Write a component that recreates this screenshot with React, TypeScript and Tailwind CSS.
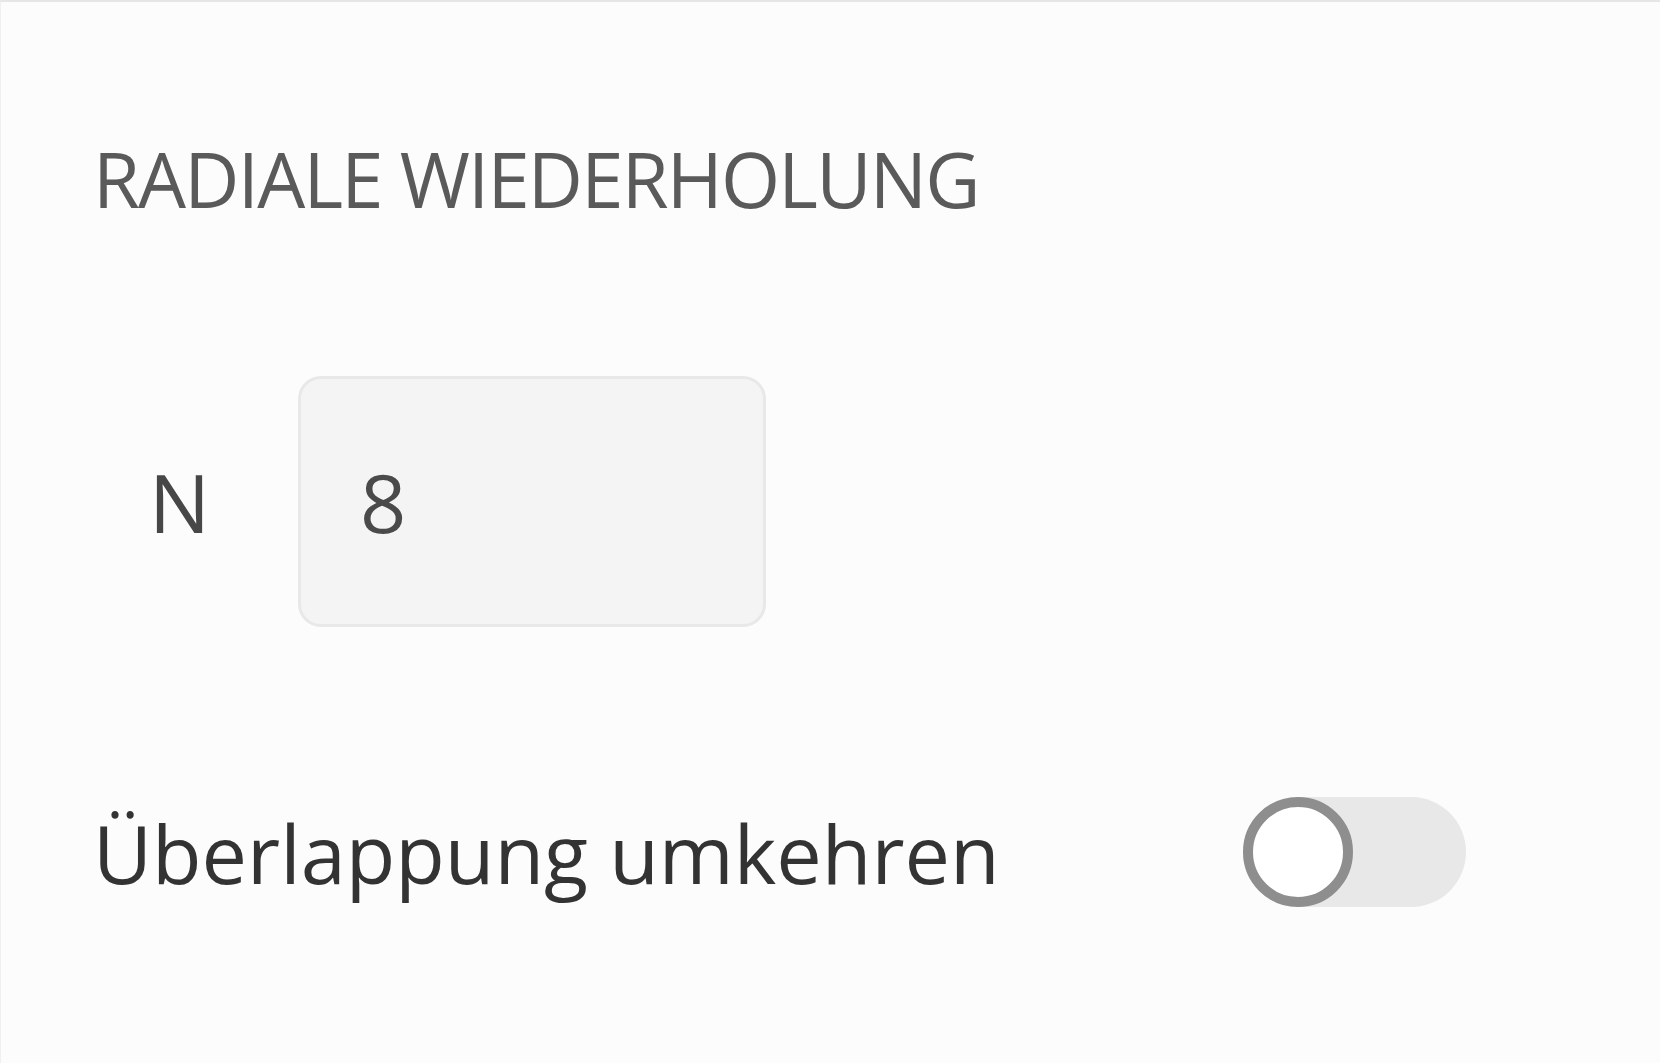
import React, { useState } from 'react';

// Radial repeat settings panel (zoomed Spectrum-like controls)
export default function App() {
  const [count, setCount] = useState('8');
  const [reverse, setReverse] = useState(false);

  return (
    <div className="w-[1660px] h-[1063px] bg-[#fcfcfc] border-t-2 border-t-[#e6e6e6] border-l border-l-[#f0f0f0] pl-[92px] pt-[139px] font-['Open_Sans','Noto_Sans',sans-serif]">
      <h2 className="text-[76px] leading-none text-[#5a5a5a] tracking-[-1.8px] uppercase font-normal">
        Radiale Wiederholung
      </h2>

      <div className="mt-[159px] flex items-center pl-[56px]">
        <label className="w-[149px] text-[81px] leading-none text-[#474747]">N</label>
        <div className="w-[468px] h-[251px] rounded-[23px] border-[3px] border-[#e8e8e8] bg-[#f4f4f4] flex items-center pl-[59px]">
          <input
            value={count}
            onChange={e => setCount(e.target.value)}
            className="w-full bg-transparent outline-none text-[81px] leading-none text-[#4a4a4a]"
          />
        </div>
      </div>

      <div className="mt-[170px] flex items-center">
        <span className="w-[1150px] text-[81px] leading-none text-[#333333]">Überlappung umkehren</span>
        <button
          onClick={() => setReverse(!reverse)}
          className="relative w-[223px] h-[110px] rounded-full bg-[#e8e8e8]"
        >
          <span className="absolute left-0 top-0 w-[110px] h-[110px] rounded-full bg-white border-[10px] border-[#8e8e8e]" />
        </button>
      </div>
    </div>
  );
}
